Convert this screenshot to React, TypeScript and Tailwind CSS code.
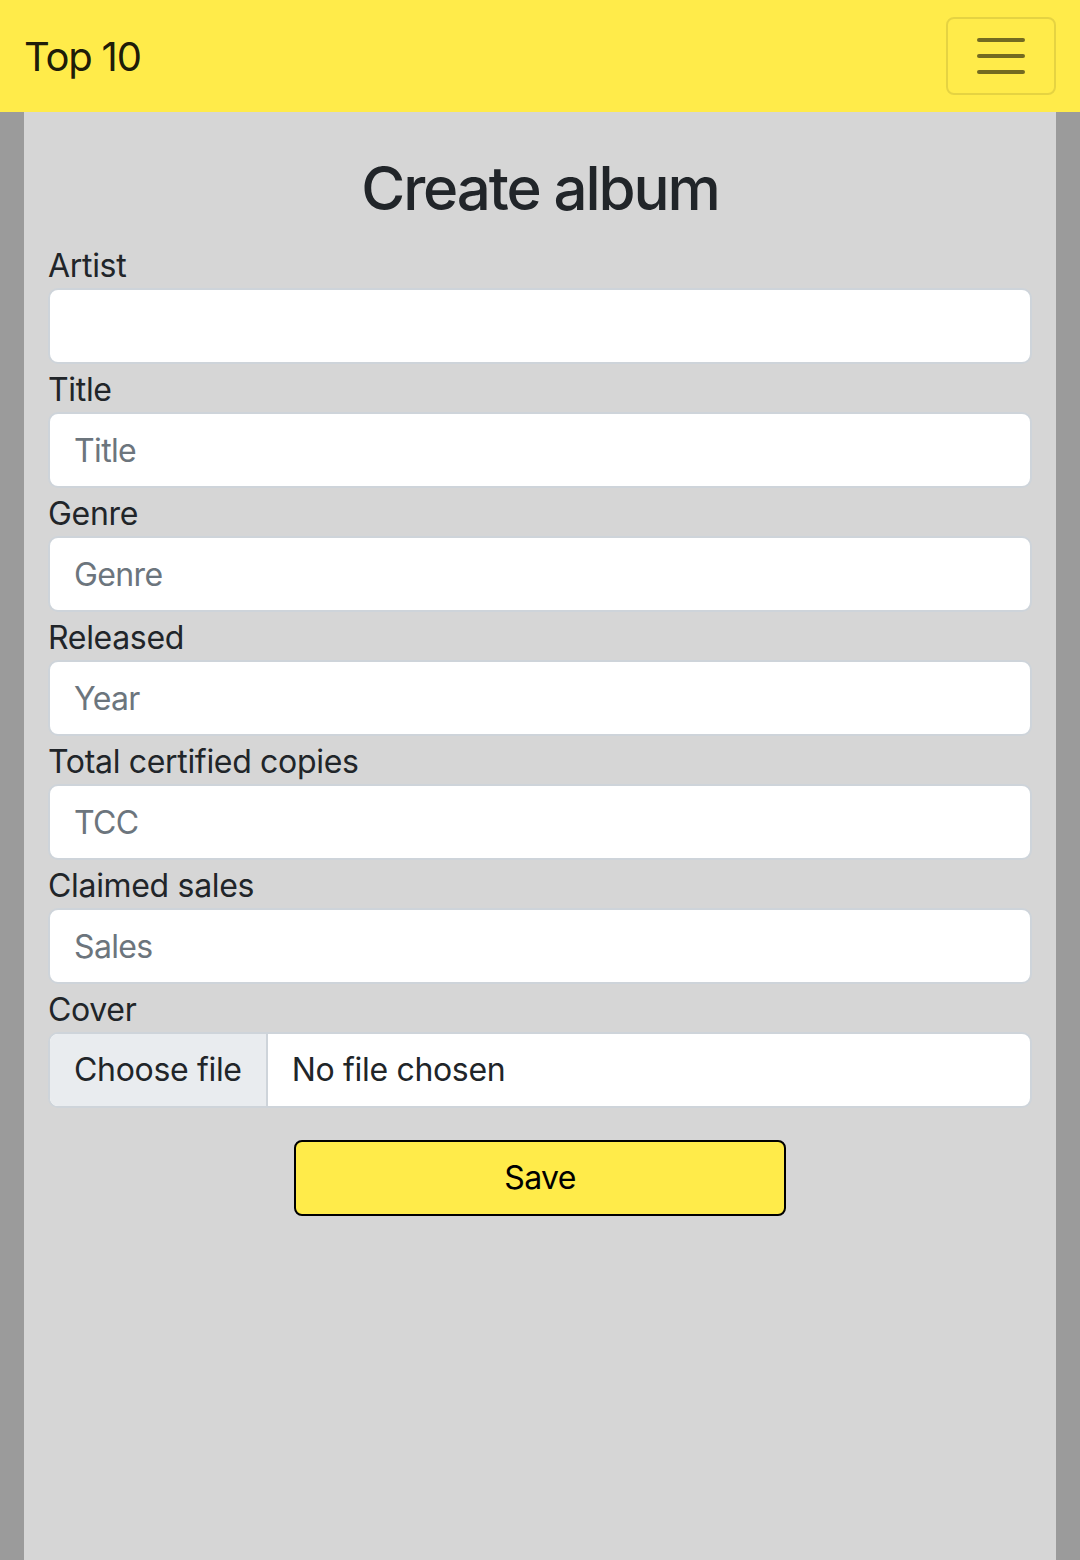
export default function App() {
  const fields = [
    { label: 'Artist', placeholder: '' },
    { label: 'Title', placeholder: 'Title' },
    { label: 'Genre', placeholder: 'Genre' },
    { label: 'Released', placeholder: 'Year' },
    { label: 'Total certified copies', placeholder: 'TCC' },
    { label: 'Claimed sales', placeholder: 'Sales' },
  ]

  return (
    <div className="min-h-[1560px] bg-[#9b9b9b] flex flex-col text-[#212529] tracking-[-0.02em]" style={{ fontFamily: 'Inter, "Noto Sans", sans-serif' }}>
      <nav className="h-[112px] bg-[#ffeb4a] flex items-center justify-between pl-6 pr-6">
        <span className="text-[40px] leading-none text-black/90 tracking-[-0.03em] pt-[2px]">Top 10</span>
        <button className="w-[110px] h-[78px] rounded-[8px] border-2 border-black/10 flex flex-col items-center justify-center gap-[12px]">
          <span className="block w-[48px] h-[4px] rounded-full bg-black/55" />
          <span className="block w-[48px] h-[4px] rounded-full bg-black/55" />
          <span className="block w-[48px] h-[4px] rounded-full bg-black/55" />
        </button>
      </nav>

      <main className="flex-1 mx-6 bg-[#d6d6d6] px-6 pt-10">
        <h1 className="text-[60px] leading-[1.2] font-medium text-center mb-4 tracking-[-0.035em]">Create album</h1>
        <form>
          {fields.map((f) => (
            <div key={f.label}>
              <label className="block text-[32px] leading-[48px] pt-[2px] -mb-[2px]">{f.label}</label>
              <input
                type="text"
                placeholder={f.placeholder}
                className="block w-full h-[76px] bg-white border-2 border-[#ced4da] rounded-[10px] px-6 text-[32px] tracking-[-0.02em] placeholder:text-[#6c757d] focus:outline-none"
              />
            </div>
          ))}
          <div>
            <label className="block text-[32px] leading-[48px] pt-[2px] -mb-[2px]">Cover</label>
            <div className="flex h-[76px] bg-white border-2 border-[#ced4da] rounded-[10px] overflow-hidden text-[32px]">
              <span className="flex items-center px-6 bg-[#e9ecef] border-r-2 border-[#ced4da]">Choose file</span>
              <span className="flex items-center px-6">No file chosen</span>
            </div>
          </div>
          <div className="flex justify-center mt-[32px]">
            <button
              type="button"
              className="w-[492px] h-[76px] bg-[#ffeb4a] border-2 border-black rounded-[8px] text-[32px] text-black tracking-[-0.02em]"
            >
              Save
            </button>
          </div>
        </form>
      </main>
    </div>
  )
}
